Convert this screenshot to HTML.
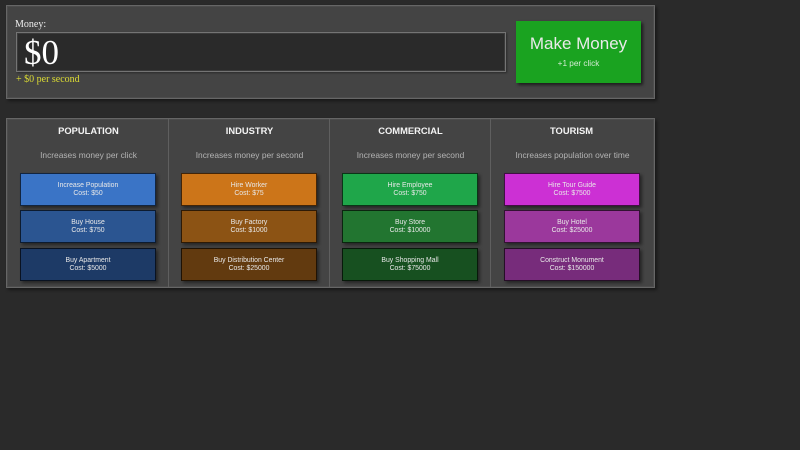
<!DOCTYPE html>
<html><head><meta charset="utf-8"><style>
*{box-sizing:border-box}
html,body{margin:0;padding:0;width:800px;height:450px;overflow:hidden;background:#2a2a2a}
.a{position:absolute}
.panel{background:#444;border:1px solid #666;box-shadow:2px 2px 3px rgba(0,0,0,.45),inset 0 0 0 1px #4c4c4c}
.t{position:absolute;font-family:"Liberation Sans",sans-serif;text-align:center;white-space:nowrap}
.s{font-family:"Liberation Serif",serif;position:absolute;white-space:nowrap}
.h{top:125px;width:161px;font-size:9.375px;line-height:13px;font-weight:bold;color:#f4f4f4}
.d{top:149px;width:161px;font-size:8.4px;line-height:12px;color:#b4b4b4}
.b{position:absolute;width:136px;height:33px;border:1px solid rgba(0,0,0,.68);box-shadow:2px 2px 3px rgba(0,0,0,.45);font-family:"Liberation Sans",sans-serif;font-size:6.875px;line-height:7.5px;color:#e8e8e8;text-align:center;padding-top:8px;white-space:nowrap}
.sep{position:absolute;top:119px;width:1px;height:168px;background:#5f5f5f}
</style></head><body>
<div class="a panel" style="left:6px;top:5px;width:649px;height:94px"></div>
<div class="s" style="left:15px;top:18px;font-size:10px;line-height:14px;color:#eee">Money:</div>
<div class="a" style="left:16px;top:32px;width:490px;height:40px;background:#2a2a2a;border:1px solid #747474;box-shadow:1px 1px 2px rgba(0,0,0,.4),inset 0 0 0 1px #3a3a3a"></div>
<div class="s" style="left:24px;top:32px;font-size:35px;line-height:42px;color:#fff">$0</div>
<div class="s" style="left:16px;top:73px;font-size:10px;line-height:14px;color:#dcdc33">+ $0 per second</div>
<div class="a" style="left:516px;top:21px;width:125px;height:62px;background:#1aa320;box-shadow:2px 2px 3px rgba(0,0,0,.6)"></div>
<div class="t" style="left:516px;top:34px;width:125px;font-size:17px;line-height:20px;font-weight:normal;color:#eaeaea">Make Money</div>
<div class="t" style="left:516px;top:58px;width:125px;font-size:8.2px;line-height:12px;color:#d4ecd4">+1 per click</div>

<div class="a panel" style="left:6px;top:118px;width:649px;height:170px"></div>
<div class="sep" style="left:168px"></div>
<div class="sep" style="left:329px"></div>
<div class="sep" style="left:490px"></div>

<div class="t h" style="left:8px">POPULATION</div>
<div class="t h" style="left:169px">INDUSTRY</div>
<div class="t h" style="left:330px">COMMERCIAL</div>
<div class="t h" style="left:491px">TOURISM</div>
<div class="t d" style="left:8px">Increases money per click</div>
<div class="t d" style="left:169px">Increases money per second</div>
<div class="t d" style="left:330px">Increases money per second</div>
<div class="t d" style="left:492px">Increases population over time</div>

<div class="b" style="left:20px;top:173px;background:#3a74c6">Increase Population<br>Cost: $50</div>
<div class="b" style="left:20px;top:210px;background:#2b5591">Buy House<br>Cost: $750</div>
<div class="b" style="left:20px;top:248px;background:#1d3a66">Buy Apartment<br>Cost: $5000</div>

<div class="b" style="left:181px;top:173px;background:#cc7519">Hire Worker<br>Cost: $75</div>
<div class="b" style="left:181px;top:210px;background:#8c5314">Buy Factory<br>Cost: $1000</div>
<div class="b" style="left:181px;top:248px;background:#623a0f">Buy Distribution Center<br>Cost: $25000</div>

<div class="b" style="left:342px;top:173px;background:#1fa64a">Hire Employee<br>Cost: $750</div>
<div class="b" style="left:342px;top:210px;background:#227530">Buy Store<br>Cost: $10000</div>
<div class="b" style="left:342px;top:248px;background:#175020">Buy Shopping Mall<br>Cost: $75000</div>

<div class="b" style="left:504px;top:173px;background:#cc30d4">Hire Tour Guide<br>Cost: $7500</div>
<div class="b" style="left:504px;top:210px;background:#9b389c">Buy Hotel<br>Cost: $25000</div>
<div class="b" style="left:504px;top:248px;background:#772c7b">Construct Monument<br>Cost: $150000</div>
</body></html>
